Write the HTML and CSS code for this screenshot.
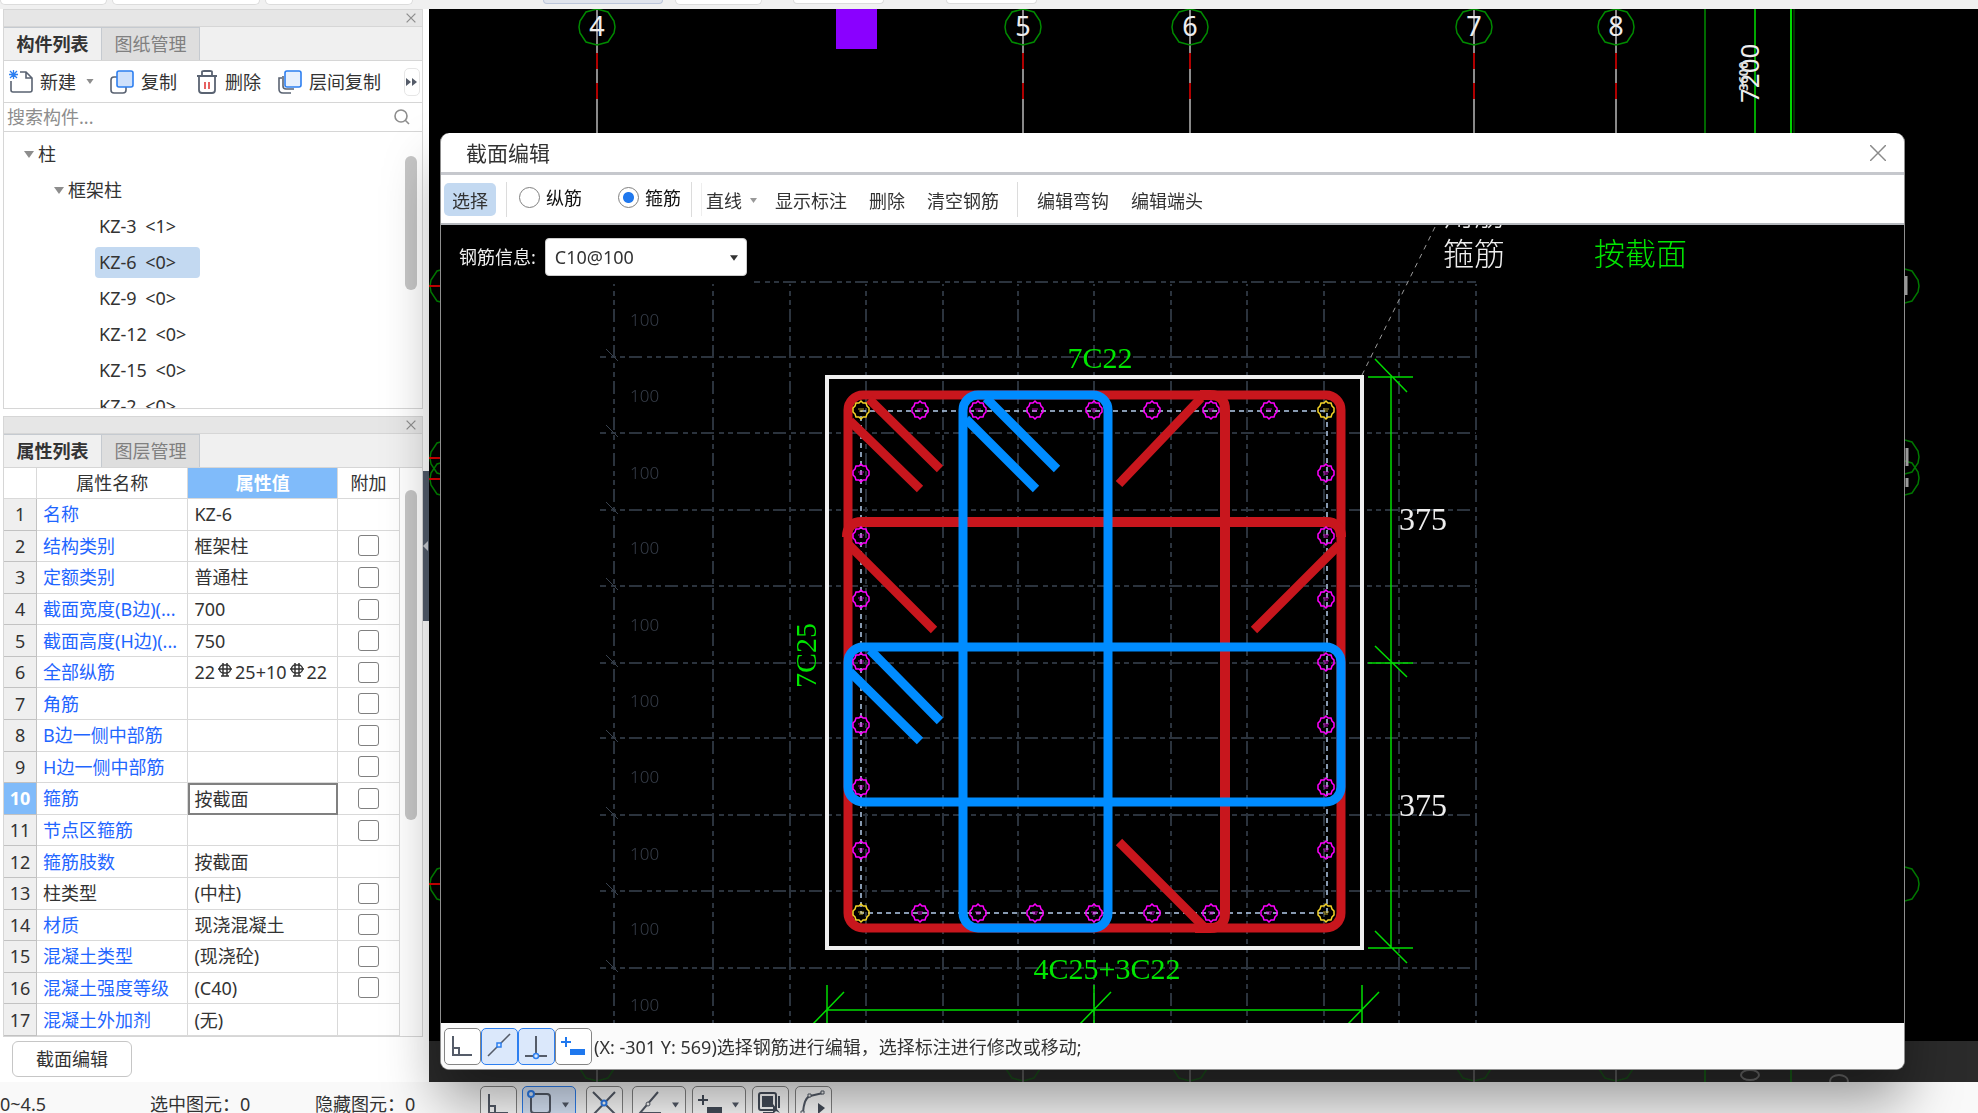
FILE: index.html
```html
<!DOCTYPE html>
<html lang="zh-CN">
<head>
<meta charset="utf-8">
<title>截面编辑</title>
<link rel="stylesheet" href="styles.css">
</head>
<body>
<svg class="defs" width="0" height="0" aria-hidden="true">
  <symbol id="close" viewBox="0 0 16 16"><path d="M1 1 15 15M15 1 1 15" fill="none" stroke="currentColor" stroke-width="2"/></symbol>
  <symbol id="caret" viewBox="0 0 10 7"><path d="M0 0H10L5 7Z" fill="currentColor"/></symbol>
  <symbol id="ortho" viewBox="0 0 37 37"><path d="M8 8V27H27M8 20H14V27" fill="none" stroke="currentColor" stroke-width="2"/></symbol>
  <symbol id="rebar" viewBox="0 0 14 16"><path d="M5 0V13M9 0V13M0 6H14M3 13H11" fill="none" stroke="currentColor" stroke-width="1.500"/><rect x="1.500" y="2" width="11" height="8" rx="4" fill="none" stroke="currentColor" stroke-width="1.500"/></symbol>
  <symbol id="axis" viewBox="-19 -19 38 38" overflow="visible"><path d="M0-18 11-15 17-6 18 0 17 6 11 15 0 18-11 15-17 6-18 0-17-6-11-15Z" fill="none" stroke="#008a00" stroke-width="1.5"/></symbol>
  <symbol id="bar" viewBox="-10 -10 20 20" overflow="visible"><path d="M0-9 2-7 5-7 6-4 8-2 8 2 6 4 5 7 2 7 0 9-2 7-5 7-6 4-8 2-8-2-6-4-5-7-2-7Z" fill="none" stroke="currentColor" stroke-width="1.5"/><path d="M-3-1H3M-2 1H2" stroke="currentColor" stroke-width="1.5" opacity=".5"/></symbol>
</svg>

<div class="app">
  <header class="ribbon">
    <span class="group g1"></span><span class="group g2"></span><span class="group g2"></span>
    <span class="group g3"></span><span class="group g4"></span><span class="group g5"></span><span class="group g6"></span>
  </header>

  <aside class="sidebar">
    <section class="panel components">
      <div class="panel-head"><button class="icon-btn" aria-label="关闭"><svg width="10" height="10"><use href="#close"/></svg></button></div>
      <div class="tabs"><button class="tab active">构件列表</button><button class="tab">图纸管理</button></div>
      <div class="tools">
        <button class="tool"><svg width="24" height="24" viewBox="0 0 24 24" fill="none"><path d="M2 11V20Q2 22 4 22H21Q23 22 23 20V8L17 2H11M17 2V8H23" stroke="#5a6372" stroke-width="1.6"/><path d="M1 1 8 8M8 1 1 8M4.500 0V9M0 4.500H9" stroke="#2d7ff0" stroke-width="1.300"/></svg>新建<svg class="arrow" width="8" height="5"><use href="#caret"/></svg></button>
        <button class="tool"><svg width="24" height="24" viewBox="0 0 24 24" fill="none"><path d="M7 7H4Q1 7 1 10V20Q1 23 4 23H13Q16 23 16 20V17" stroke="#5a6372" stroke-width="1.600"/><rect x="7" y="1" width="16" height="16" rx="2" fill="#cfe1fb" stroke="#2d7ff0" stroke-width="1.600"/></svg>复制</button>
        <button class="tool"><svg width="22" height="24" viewBox="0 0 22 24" fill="none"><path d="M1 6H21M6 6V2Q6 1 8 1H14Q16 1 16 2V6M3 6V20Q3 23 6 23H16Q19 23 19 20V6" stroke="#5a6372" stroke-width="1.800"/><path d="M9 12V19M13 12V19" stroke="#e03b3b" stroke-width="1.600"/></svg>删除</button>
        <button class="tool"><svg width="24" height="24" viewBox="0 0 24 24" fill="none"><path d="M4 8H1V19Q1 23 5 23H13M5 6V16Q5 19 8 19H16" stroke="#5a6372" stroke-width="1.600"/><rect x="7" y="1" width="16" height="16" rx="2" fill="#e7f0fd" stroke="#2d7ff0" stroke-width="1.600"/></svg>层间复制</button>
        <button class="more" aria-label="更多"><svg width="12" height="8" viewBox="0 0 12 8"><path d="M0 0 5 4 0 8ZM6 0 11 4 6 8Z" fill="#555c69"/></svg></button>
      </div>
      <label class="search"><input type="text" placeholder="搜索构件..." aria-label="搜索构件"><svg width="16" height="16" viewBox="0 0 16 16" fill="none" stroke="#8d8d8d" stroke-width="1.600"><circle cx="7" cy="7" r="6"/><path d="M11 11 15 15"/></svg></label>
      <div class="tree">
        <ul>
          <li class="l1"><svg width="10" height="7"><use href="#caret"/></svg>柱</li>
          <li class="l2"><svg width="10" height="7"><use href="#caret"/></svg>框架柱</li>
          <li class="l3"><span>KZ-3 <i>&lt;1&gt;</i></span></li>
          <li class="l3 sel"><span>KZ-6 <i>&lt;0&gt;</i></span></li>
          <li class="l3"><span>KZ-9 <i>&lt;0&gt;</i></span></li>
          <li class="l3"><span>KZ-12 <i>&lt;0&gt;</i></span></li>
          <li class="l3"><span>KZ-15 <i>&lt;0&gt;</i></span></li>
          <li class="l3"><span>KZ-2 <i>&lt;0&gt;</i></span></li>
        </ul>
        <div class="scroll s1"></div>
      </div>
    </section>

    <section class="panel props">
      <div class="panel-head"><button class="icon-btn" aria-label="关闭"><svg width="10" height="10"><use href="#close"/></svg></button></div>
      <div class="tabs"><button class="tab active">属性列表</button><button class="tab">图层管理</button></div>
      <div class="grid">
        <table>
          <colgroup><col class="c-no"><col class="c-name"><col class="c-val"><col class="c-add"></colgroup>
          <thead><tr><th></th><th>属性名称</th><th class="hot">属性值</th><th>附加</th></tr></thead>
          <tbody>
            <tr><th>1</th><td>名称</td><td>KZ-6</td><td></td></tr>
            <tr><th>2</th><td>结构类别</td><td>框架柱</td><td><input type="checkbox" aria-label="附加 结构类别"></td></tr>
            <tr><th>3</th><td>定额类别</td><td>普通柱</td><td><input type="checkbox" aria-label="附加 定额类别"></td></tr>
            <tr><th>4</th><td>截面宽度(B边)(...</td><td>700</td><td><input type="checkbox" aria-label="附加 截面宽度"></td></tr>
            <tr><th>5</th><td>截面高度(H边)(...</td><td>750</td><td><input type="checkbox" aria-label="附加 截面高度"></td></tr>
            <tr><th>6</th><td>全部纵筋</td><td>22<svg class="rb" width="14" height="16"><use href="#rebar"/></svg>25+10<svg class="rb" width="14" height="16"><use href="#rebar"/></svg>22</td><td><input type="checkbox" aria-label="附加 全部纵筋"></td></tr>
            <tr><th>7</th><td>角筋</td><td></td><td><input type="checkbox" aria-label="附加 角筋"></td></tr>
            <tr><th>8</th><td>B边一侧中部筋</td><td></td><td><input type="checkbox" aria-label="附加 B边一侧中部筋"></td></tr>
            <tr><th>9</th><td>H边一侧中部筋</td><td></td><td><input type="checkbox" aria-label="附加 H边一侧中部筋"></td></tr>
            <tr><th class="hot">10</th><td>箍筋</td><td class="edit">按截面</td><td><input type="checkbox" aria-label="附加 箍筋"></td></tr>
            <tr><th>11</th><td>节点区箍筋</td><td></td><td><input type="checkbox" aria-label="附加 节点区箍筋"></td></tr>
            <tr><th>12</th><td>箍筋肢数</td><td>按截面</td><td></td></tr>
            <tr><th>13</th><td class="plain">柱类型</td><td>(中柱)</td><td><input type="checkbox" aria-label="附加 柱类型"></td></tr>
            <tr><th>14</th><td>材质</td><td>现浇混凝土</td><td><input type="checkbox" aria-label="附加 材质"></td></tr>
            <tr><th>15</th><td>混凝土类型</td><td>(现浇砼)</td><td><input type="checkbox" aria-label="附加 混凝土类型"></td></tr>
            <tr><th>16</th><td>混凝土强度等级</td><td>(C40)</td><td><input type="checkbox" aria-label="附加 混凝土强度等级"></td></tr>
            <tr><th>17</th><td>混凝土外加剂</td><td>(无)</td><td></td></tr>
          </tbody>
        </table>
        <div class="scroll s2"></div>
      </div>
    </section>
    <div class="sidebar-foot"><button class="section-btn">截面编辑</button></div>
    <div class="splitter"><svg width="5" height="10" viewBox="0 0 5 10"><path d="M5 0V10L0 5Z" fill="#c8ccd2"/></svg></div>
  </aside>

  <main class="workspace">
    <div class="viewport">
      <svg class="plan" width="100%" height="100%">
        <g transform="translate(-429 -9)">
          <g stroke="#8c8c8c" stroke-width="2"><path d="M597 9V134M1023 9V134M1190 9V134M1474 9V134M1616 9V134"/><path d="M597 53V69M597 83V99M1023 53V69M1023 83V99M1190 53V69M1190 83V99M1474 53V69M1474 83V99M1616 53V69M1616 83V99" stroke="#b00000"/></g>
          <rect x="836" y="9" width="41" height="40" fill="#8a00ff"/>
          <g><use href="#axis" x="578" y="8" width="38" height="38"/><use href="#axis" x="1004" y="8" width="38" height="38"/><use href="#axis" x="1171" y="8" width="38" height="38"/><use href="#axis" x="1455" y="8" width="38" height="38"/><use href="#axis" x="1597" y="8" width="38" height="38"/>
          <use href="#axis" x="429" y="267" width="38" height="38"/><use href="#axis" x="429" y="439" width="38" height="38"/><use href="#axis" x="429" y="460" width="38" height="38"/><use href="#axis" x="429" y="865" width="38" height="38"/>
          <use href="#axis" x="1882" y="267" width="38" height="38"/><use href="#axis" x="1882" y="438" width="38" height="38"/><use href="#axis" x="1882" y="459" width="38" height="38"/><use href="#axis" x="1882" y="865" width="38" height="38"/></g>
          <path d="M429 286H440M429 458H440M429 479H440M429 884H440" stroke="#e00000" stroke-width="2"/>
          <path d="M1906 276V295M1907 448V466M1907 478V487" stroke="#bbb" stroke-width="3"/>
          <g class="axis-no"><text x="597" y="36">4</text><text x="1023" y="36">5</text><text x="1190" y="36">6</text><text x="1474" y="36">7</text><text x="1616" y="36">8</text></g>
          <path d="M1705 9V134" stroke="#006a00" stroke-width="2"/><path d="M1755 9V134" stroke="#00a800" stroke-width="2"/><path d="M1791 9V134" stroke="#00d800" stroke-width="2"/><path d="M1794 9V134" stroke="#006a00"/>
          <text class="dim-big" transform="translate(1759 103) rotate(-90)">7200</text>
          <text class="dim-small" transform="translate(1748 91) rotate(-90)">3600</text>
        </g>
      </svg>
    </div>
    <div class="strip">
      <svg width="100%" height="100%"><g transform="translate(-429 -1041)" opacity=".4"><use href="#axis" x="578" y="1044" width="38" height="38"/><use href="#axis" x="1004" y="1044" width="38" height="38"/><use href="#axis" x="1171" y="1044" width="38" height="38"/><use href="#axis" x="1455" y="1044" width="38" height="38"/><use href="#axis" x="1597" y="1044" width="38" height="38"/>
      <path d="M597 1068V1082M1023 1068V1082M1190 1068V1082M1474 1068V1082M1616 1068V1082" stroke="#aaa" stroke-width="2"/><path d="M1705 1068V1082M1791 1068V1082" stroke="#0a0" stroke-width="2"/><g fill="none" stroke="#ccc" stroke-width="2"><ellipse cx="1750" cy="1075" rx="9" ry="5"/><ellipse cx="1839" cy="1081" rx="9" ry="6"/></g></g></svg>
    </div>

    <section class="dialog" role="dialog" aria-labelledby="dlg-title">
      <header class="dlg-title"><h1 id="dlg-title">截面编辑</h1><button class="icon-btn" aria-label="关闭"><svg width="16" height="16" viewBox="0 0 16 16"><path d="M0 0 16 16M16 0 0 16" stroke="#8a8a8a" stroke-width="1.500"/></svg></button></header>
      <div class="dlg-tools">
        <button class="dt on">选择</button>
        <span class="sep"></span>
        <label class="radio"><input type="radio" name="kind">纵筋</label>
        <label class="radio"><input type="radio" name="kind" checked>箍筋</label>
        <span class="sep"></span>
        <button class="dt line">直线<svg width="7" height="5"><use href="#caret"/></svg></button>
        <button class="dt">显示标注</button>
        <button class="dt">删除</button>
        <button class="dt">清空钢筋</button>
        <span class="sep far"></span>
        <button class="dt">编辑弯钩</button>
        <button class="dt">编辑端头</button>
      </div>
      <div class="dlg-canvas">
        <svg class="drawing" width="100%" height="100%">
          <g transform="translate(-441 -225)">
            <g class="gridlines">
              <path class="v" d="M614 284V1024M713 284V1024M790 284V1024M866 284V1024M943 284V1024M1018 284V1024M1094 284V1024M1171 284V1024M1247 284V1024M1324 284V1024M1399 284V1024M1476 284V1024"/>
              <path class="h" d="M754 282H1476M600 357H1476M600 433H1476M600 510H1476M600 586H1476M600 663H1476M600 738H1476M600 815H1476M600 891H1476M600 968H1476"/>
            </g>
            <path d="M606 349 618 361M606 425 618 437M606 502 618 514M606 578 618 590M606 655 618 667M606 730 618 742M606 807 618 819M606 883 618 895M606 960 618 972" stroke="#39424e"/>
            <g class="step"><text x="630" y="326">100</text><text x="630" y="402">100</text><text x="630" y="479">100</text><text x="630" y="554">100</text><text x="630" y="631">100</text><text x="630" y="707">100</text><text x="630" y="783">100</text><text x="630" y="860">100</text><text x="630" y="935">100</text><text x="630" y="1011">100</text></g>
            <rect x="827" y="377" width="535" height="571" fill="none" stroke="#f0f0f0" stroke-width="4"/>
            <path d="M861 411H1327V913H861Z" fill="none" stroke="#b4cdec" stroke-width="1.500" stroke-dasharray="5 4"/>
            <g fill="none" stroke="#c8161d" stroke-width="9">
              <rect x="848" y="395" width="493" height="533" rx="15"/>
              <path d="M1341 537Q1341 522 1326 522H862Q847 522 847 537" stroke-width="10"/>
              <path d="M1200 395H1210Q1225 395 1225 410V913Q1225 928 1210 928H1195" stroke-width="10"/>
              <path d="M850 421 920 489M869 399 940 469M1201 398 1119 484M1339 545 1254 630M849 545 934 630M1119 842 1205 928"/>
            </g>
            <g fill="none" stroke="#008cff" stroke-width="9">
              <rect x="963" y="395" width="145" height="533" rx="15"/>
              <rect x="848" y="647" width="493" height="155" rx="15"/>
              <path d="M966 419 1036 489M986 398 1057 469M850 672 920 741M870 650 940 721"/>
            </g>
            <g class="bars">
              <use href="#bar" x="910" y="400" width="20" height="20"/><use href="#bar" x="968" y="400" width="20" height="20"/><use href="#bar" x="1025" y="400" width="20" height="20"/><use href="#bar" x="1084" y="400" width="20" height="20"/><use href="#bar" x="1142" y="400" width="20" height="20"/><use href="#bar" x="1201" y="400" width="20" height="20"/><use href="#bar" x="1259" y="400" width="20" height="20"/>
              <use href="#bar" x="910" y="903" width="20" height="20"/><use href="#bar" x="968" y="903" width="20" height="20"/><use href="#bar" x="1025" y="903" width="20" height="20"/><use href="#bar" x="1084" y="903" width="20" height="20"/><use href="#bar" x="1142" y="903" width="20" height="20"/><use href="#bar" x="1201" y="903" width="20" height="20"/><use href="#bar" x="1259" y="903" width="20" height="20"/>
              <use href="#bar" x="851" y="463" width="20" height="20"/><use href="#bar" x="851" y="526" width="20" height="20"/><use href="#bar" x="851" y="589" width="20" height="20"/><use href="#bar" x="851" y="652" width="20" height="20"/><use href="#bar" x="851" y="715" width="20" height="20"/><use href="#bar" x="851" y="777" width="20" height="20"/><use href="#bar" x="851" y="840" width="20" height="20"/>
              <use href="#bar" x="1316" y="463" width="20" height="20"/><use href="#bar" x="1316" y="526" width="20" height="20"/><use href="#bar" x="1316" y="589" width="20" height="20"/><use href="#bar" x="1316" y="652" width="20" height="20"/><use href="#bar" x="1316" y="715" width="20" height="20"/><use href="#bar" x="1316" y="777" width="20" height="20"/><use href="#bar" x="1316" y="840" width="20" height="20"/>
            </g>
            <g class="corner-bars"><use href="#bar" x="851" y="400" width="20" height="20"/><use href="#bar" x="1316" y="400" width="20" height="20"/><use href="#bar" x="851" y="903" width="20" height="20"/><use href="#bar" x="1316" y="903" width="20" height="20"/></g>
            <g stroke="#00dc00" stroke-width="1.500" fill="none">
              <path d="M1391 377V948M1368 377H1413M1368 663H1413M1368 948H1413M1375 359 1407 392M1375 646 1407 677M1375 931 1407 963"/>
              <path d="M827 1010H1362M827 985V1024M1094 985V1024M1362 985V1024M844 992 812 1025M1111 992 1079 1025M1379 992 1347 1025"/>
            </g>
            <path d="M1362 375 1436 225" stroke="#999" stroke-dasharray="5 5" fill="none"/>
            <g class="num green"><text x="1100" y="368" text-anchor="middle">7C22</text><text x="1107" y="979" text-anchor="middle">4C25+3C22</text><text transform="translate(816 688) rotate(-90)">7C25</text></g>
            <g class="num white"><text x="1399" y="530">375</text><text x="1399" y="816">375</text></g>
            <g class="cjk"><text x="1443" y="225">角筋</text><text x="1443" y="265">箍筋</text></g>
            <g class="cjk green"><text x="1594" y="265">按截面</text><text x="1598" y="225">4C25</text></g>
          </g>
        </svg>
        <div class="rebar-info"><label for="rebar-spec">钢筋信息:</label><span class="combo"><select id="rebar-spec"><option>C10@100</option></select><svg width="8" height="6"><use href="#caret"/></svg></span></div>
      </div>
      <footer class="dlg-status">
        <button class="sb" aria-label="正交"><svg width="37" height="37"><use href="#ortho"/></svg></button>
        <button class="sb on" aria-label="中点"><svg width="37" height="37" viewBox="0 0 37 37" fill="none"><path d="M6 28 28 6" stroke="#555c69" stroke-width="1.600"/><rect x="15" y="15" width="4" height="4" fill="#dbe8fb" stroke="#2d7ff0" stroke-width="1.500"/></svg></button>
        <button class="sb on" aria-label="垂点"><svg width="37" height="37" viewBox="0 0 37 37" fill="none"><path d="M17 8V27M6 28H28" stroke="#555c69" stroke-width="2"/><circle cx="17" cy="28" r="2.500" fill="#dbe8fb" stroke="#2d7ff0" stroke-width="1.500"/></svg></button>
        <button class="sb" aria-label="动态输入"><svg width="37" height="37" viewBox="0 0 37 37" fill="none"><path d="M5 14H15M10 9V19" stroke="#1f78ee" stroke-width="2"/><rect x="14" y="21" width="15" height="6" fill="#1f78ee"/></svg></button>
        <p>(X: -301 Y: 569)选择钢筋进行编辑，选择标注进行修改或移动;</p>
      </footer>
    </section>
  </main>

  <footer class="statusbar">
    <div class="readout"><span>0~4.5</span><span>选中图元：0</span><span>隐藏图元：0</span></div>
    <div class="snaps">
      <button class="sb" aria-label="正交"><svg width="37" height="37"><use href="#ortho"/></svg></button>
      <button class="sb wide on" aria-label="捕捉"><svg width="37" height="37" viewBox="0 0 37 37" fill="none"><rect x="8" y="8" width="19" height="19" rx="3" stroke="#555c69" stroke-width="2"/><circle cx="8" cy="8" r="3" fill="#dbe8fb" stroke="#2d7ff0" stroke-width="2"/></svg><svg class="c" width="7" height="6"><use href="#caret"/></svg></button>
      <button class="sb" aria-label="交点"><svg width="37" height="37" viewBox="0 0 37 37" fill="none"><path d="M6 6 29 29M28 6 6 29" stroke="#555c69" stroke-width="2"/><circle cx="17" cy="17" r="2.500" fill="#fff" stroke="#2d7ff0" stroke-width="2"/></svg></button>
      <button class="sb wide" aria-label="延长"><svg width="37" height="37" viewBox="0 0 37 37" fill="none"><path d="M25 6 7 27H28" stroke="#555c69" stroke-width="2"/><circle cx="15" cy="18" r="2" fill="#fff" stroke="#555c69"/></svg><svg class="c" width="7" height="6"><use href="#caret"/></svg></button>
      <button class="sb wide" aria-label="输入"><svg width="37" height="37" viewBox="0 0 37 37" fill="none"><path d="M5 14H15M10 9V19" stroke="#454d5a" stroke-width="2"/><rect x="14" y="21" width="15" height="6" fill="#454d5a"/></svg><svg class="c" width="7" height="6"><use href="#caret"/></svg></button>
      <button class="sb" aria-label="图层"><svg width="37" height="37" viewBox="0 0 37 37" fill="none"><rect x="6" y="7" width="17" height="17" rx="2" stroke="#454d5a" stroke-width="2"/><rect x="9" y="10" width="11" height="11" fill="#454d5a"/><path d="M26 10V22M10 27H20" stroke="#454d5a" stroke-width="2"/><path d="M20 18V28L23 25 27 27Z" fill="#454d5a"/></svg></button>
      <button class="sb" aria-label="折线"><svg width="37" height="37" viewBox="0 0 37 37" fill="none"><path d="M7 27Q8 12 14 10L27 7" stroke="#555c69" stroke-width="2"/><path d="M12 8H15V11H12ZM25 5H28V8H25ZM5 25H8V28H5Z" fill="#fff" stroke="#555c69"/><path d="M22 17V28L29 22Z" fill="#454d5a"/></svg></button>
    </div>
  </footer>
</div>
</body>
</html>
```
FILE: styles.css
```css
* { box-sizing: border-box; }
body {
  margin: 0;
  font: 18px/24px "Noto Sans", "Noto Sans CJK SC", sans-serif;
  color: #333;
  background: #f0f0f0;
}
button, input, select { font: inherit; color: inherit; }
button { border: 0; background: none; padding: 0; white-space: nowrap; }
ul { list-style: none; margin: 0; padding: 0; }
.defs { position: absolute; }

.app {
  height: 100vh;
  display: grid;
  grid-template: 9px minmax(0, 1fr) 31px / 429px minmax(0, 1fr);
  overflow: hidden;
}

/* bottom edge of the ribbon */
.ribbon { grid-column: 1 / -1; display: flex; gap: 5px; overflow: hidden; }
.group { flex: none; height: 5px; background: #fff; border: 1px solid #dcdcdc; border-top: 0; border-radius: 0 0 5px 5px; }
.g1 { width: 107px; }
.g2 { width: 148px; }
.g3 { width: 120px; height: 4px; margin-left: 125px; background: #e0e4ec; border-color: #bcc6da; }
.g4 { width: 87px; margin-left: 7px; }
.g5 { width: 91px; margin-left: 26px; height: 4px; }
.g6 { width: 91px; margin-left: 57px; height: 4px; }

/* left column */
.sidebar {
  position: relative;
  display: flex;
  flex-direction: column;
  min-height: 0;
  padding: 0 6px 0 3px;
  background: #fff;
}
.panel { border: 1px solid #d6d6d6; display: flex; flex-direction: column; background: #fff; min-height: 0; }
.components { flex: none; height: 400px; margin-bottom: 7px; }
.props { flex: 1; }
.panel-head { flex: none; height: 17px; display: flex; justify-content: flex-end; align-items: center; padding-right: 6px; background: #e6e6e6; border-bottom: 1px solid #d6d6d6; }
.icon-btn { display: flex; color: #8d8d8d; }
.tabs { flex: none; height: 34px; display: flex; background: #f0f0f0; border-bottom: 1px solid #d6d6d6; }
.tab { width: 98px; border-right: 1px solid #c5cad0; border-top: 1px solid #c5cad0; background: #dedede; color: #808080; }
.tab.active { background: #f0f0f0; color: #333; font-weight: 700; }

.tools { flex: none; height: 42px; display: flex; align-items: center; gap: 19px; padding-left: 5px; border-bottom: 1px solid #d6d6d6; }
.tool { display: flex; align-items: center; gap: 7px; }
.arrow { margin-left: 3px; color: #8d8d8d; }
.tools .tool:nth-child(2) { margin-left: -3px; }
.tools .tool:nth-child(4) { margin-left: -2px; }
.more { width: 16px; height: 28px; margin-left: auto; margin-right: 2px; border: 1px solid #e6e6e6; border-radius: 5px; display: flex; align-items: center; justify-content: center; }

.search { flex: none; height: 29px; display: flex; align-items: center; padding: 0 12px 0 3px; border-bottom: 1px solid #d6d6d6; }
.search input { flex: 1; min-width: 0; border: 0; padding: 0; background: none; outline: 0; height: 24px; }
.search input::placeholder { color: #8d8d8d; opacity: 1; }

.tree { flex: 1; min-height: 0; display: flex; justify-content: space-between; overflow: hidden; padding-top: 4px; }
.tree li { height: 36px; display: flex; align-items: center; }
.tree li svg { margin-right: 4px; color: #8d8d8d; }
.tree i { font-style: normal; margin-left: 4px; }
.l1 { padding-left: 20px; }
.l2 { padding-left: 50px; }
.l3 { padding-left: 91px; }
.l3 span { height: 31px; line-height: 31px; min-width: 105px; padding-left: 4px; border-radius: 4px; }
.sel span { background: #c3d9f1; }
.scroll { flex: none; width: 12px; border-radius: 6px; background: #c6c6c6; margin-right: 5px; }
.s1 { height: 134px; margin-top: 20px; }
.s2 { height: 330px; margin-top: 22px; }

.grid { flex: 1; min-height: 0; display: flex; justify-content: space-between; overflow: hidden; }
table { width: 396px; height: 100%; table-layout: fixed; border-collapse: separate; border-spacing: 0; }
.c-no { width: 33px; }
.c-name { width: 151px; }
.c-val { width: 149px; }
.c-add { width: 62px; }
th, td { padding: 0; border: 0 solid #d9d9d9; border-width: 0 1px 1px 0; font-weight: 400; line-height: 24px; white-space: nowrap; }
thead th { height: 31px; }
tbody th { background: #efefef; border-color: #c2c2c2; }
td { padding-left: 6px; }
td:nth-child(2) { color: #1f66ff; }
td.plain { color: #333; }
td:nth-child(4) { padding: 0; text-align: center; }
th.hot { background: #80bbfa; color: #fff; font-weight: 700; }
td.edit { border: 2px solid #808080; padding-left: 4px; line-height: 20px; }
td input { appearance: none; display: block; width: 21px; height: 21px; margin: 0 auto; border: 1px solid #808080; border-radius: 3px; background: #fff; }
.rb { margin: 0 3px; vertical-align: 0; }

.sidebar-foot { flex: none; height: 45px; padding: 4px 9px; }
.section-btn { width: 120px; height: 36px; border: 1px solid #c6c6c6; border-radius: 6px; background: #fff; }
.splitter { position: absolute; right: 0; top: 462px; width: 6px; height: 150px; display: flex; align-items: center; background: #525c6b; }

/* model view */
.workspace { position: relative; z-index: 1; display: flex; flex-direction: column; min-width: 0; min-height: 0; }
.viewport { flex: 1; min-height: 0; overflow: hidden; background: #000; }
.strip { flex: none; height: 41px; overflow: hidden; background: #2b2b2b; }
.viewport svg, .strip svg { display: block; }
.axis-no { font-size: 27px; fill: #eee; text-anchor: middle; }
.dim-big { font-size: 26px; fill: #eee; }
.dim-small { font-size: 13px; font-weight: 700; fill: #ddd; }

/* section editor window */
.dialog {
  position: absolute;
  inset: 124px 73px 12px 11px;
  display: flex;
  flex-direction: column;
  overflow: hidden;
  border-radius: 9px;
  background: #fff;
  border: 1px solid #8f8f8f;
  border-top: 0;
  box-shadow: 0 32px 56px rgba(0, 0, 0, .38);
}
.dlg-title { flex: none; height: 42px; display: flex; align-items: center; justify-content: space-between; padding: 0 18px 0 25px; border-bottom: 3px solid #c6c8cd; }
h1 { margin: 0; font-size: 21px; line-height: 28px; font-weight: 400; }
.dlg-tools { flex: none; height: 50px; display: flex; align-items: center; padding-left: 3px; border-bottom: 2px solid #b5b8bd; }
.dt { height: 33px; margin-right: 22px; padding-top: 3px; }
.dt.on { width: 52px; margin-right: 10px; border-radius: 5px; background: #c3d9f1; }
.sep { width: 1px; height: 35px; background: #dcdcdc; }
.sep.far { margin: 0 19px 0 -4px; }
.radio { display: flex; align-items: center; gap: 6px; margin: 0 13px 3px 12px; color: #111; }
.radio + .radio { margin: 0 10px 3px 23px; }
.radio input { appearance: none; width: 21px; height: 21px; margin: 0; border: 1px solid #808080; border-radius: 50%; background: #fff; }
.radio input:checked { background: radial-gradient(circle, #1f78ee 5px, #fff 6px); }
.dt.line { display: flex; align-items: center; gap: 8px; margin: 0 18px 0 9px; padding: 3px 0 0 4px; border-left: 1px solid #eee; }
.dt.line svg { color: #999; }

.dlg-canvas { position: relative; flex: 1; min-height: 0; overflow: hidden; background: #000; }
.drawing { position: absolute; inset: 0; }
.gridlines { fill: none; stroke: #2b333d; stroke-width: 2; stroke-dasharray: 13 5 5 4 5 4; }
.gridlines .v { stroke-dashoffset: 11px; }
.gridlines .h { stroke-dashoffset: 7px; }
.step { font-size: 17px; font-weight: 300; fill: #363d49; }
.num { font: 30px "Liberation Serif", serif; }
.white { fill: #eee; font-size: 32px; }
.cjk { font: 300 31px "Noto Sans CJK SC", sans-serif; fill: #eee; }
.num.green, .cjk.green { fill: #00e600; }
.bars { color: #f0f; }
.corner-bars { color: #f5d428; }
.rebar-info { position: relative; display: flex; align-items: center; gap: 9px; padding: 13px 18px; color: #eee; }
.combo { position: relative; width: 202px; height: 38px; color: #333; }
.combo select { appearance: none; width: 100%; height: 100%; padding: 0 9px; border: 1px solid #ccc; border-radius: 4px; background: #fff; }
.combo svg { position: absolute; right: 9px; top: 17px; }

.dlg-status { flex: none; height: 46px; display: flex; align-items: center; padding: 1px 0 0 3px; background: #fbfbfb; }
.dlg-status p { margin: 0 0 0 2px; white-space: nowrap; }
.sb { position: relative; flex: none; width: 37px; height: 37px; display: flex; align-items: center; border: 1px solid #858585; border-radius: 5px; background: #fff; color: #555c69; }
.sb.on { border-color: #2d7ff0; background: #dbe8fb; }
.sb > svg { flex: none; }
.sb.wide { width: 54px; }
.sb .c { margin-left: 2px; }

.statusbar { grid-column: 1 / -1; display: flex; background: #f9f9f9; min-height: 0; }
.readout { flex: none; width: 480px; display: flex; padding-top: 10px; white-space: nowrap; }
.readout span { width: 165px; }
.readout span:first-child { width: 150px; }
.snaps { display: flex; gap: 8px; padding-top: 4px; }
.snaps .sb:first-child { margin-right: -3px; }
.snaps .sb:nth-child(2) { margin-right: 2px; }
.snaps .sb:nth-child(6) { margin-right: -2px; }
.snaps .sb:nth-child(4), .snaps .sb:nth-child(5) { margin-right: -2px; }
.snaps .sb:nth-child(3) { margin-right: 1px; }
```
